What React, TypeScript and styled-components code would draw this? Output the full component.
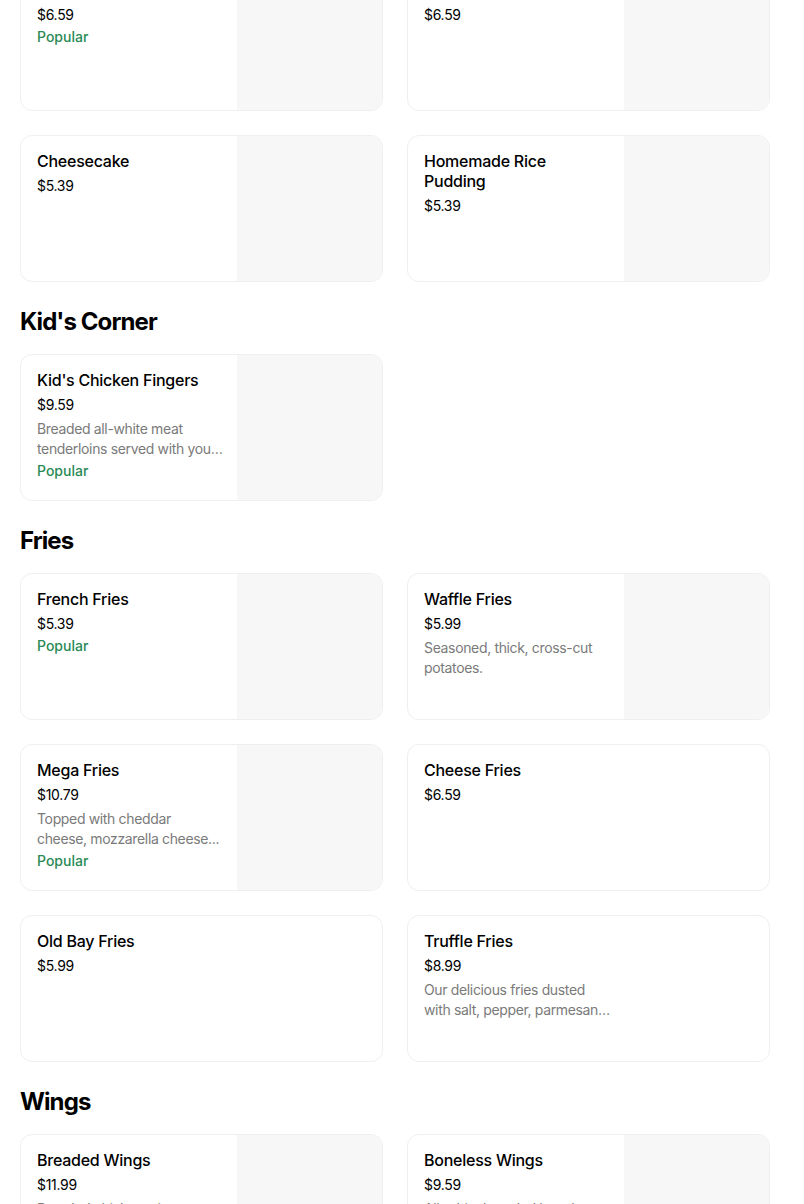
import styled, { createGlobalStyle } from "styled-components";

type Item = {
  name: string;
  price: string;
  description?: string;
  popular?: boolean;
  image?: boolean;
};

type Section = {
  title: string;
  items: Item[];
};

const sections: Section[] = [
  {
    title: "Desserts",
    items: [
      { name: "Chocolate Cake", price: "$6.59", popular: true, image: true },
      { name: "Carrot Cake", price: "$6.59", image: true },
      { name: "Cheesecake", price: "$5.39", image: true },
      { name: "Homemade Rice Pudding", price: "$5.39", image: true },
    ],
  },
  {
    title: "Kid's Corner",
    items: [
      {
        name: "Kid's Chicken Fingers",
        price: "$9.59",
        description: "Breaded all-white meat tenderloins served with your choice of fries.",
        popular: true,
        image: true,
      },
    ],
  },
  {
    title: "Fries",
    items: [
      { name: "French Fries", price: "$5.39", popular: true, image: true },
      {
        name: "Waffle Fries",
        price: "$5.99",
        description: "Seasoned, thick, cross-cut potatoes.",
        image: true,
      },
      {
        name: "Mega Fries",
        price: "$10.79",
        description: "Topped with cheddar\ncheese, mozzarella cheese...",
        popular: true,
        image: true,
      },
      { name: "Cheese Fries", price: "$6.59" },
      { name: "Old Bay Fries", price: "$5.99" },
      {
        name: "Truffle Fries",
        price: "$8.99",
        description: "Our delicious fries dusted with salt, pepper, parmesan cheese and truffle oil.",
      },
    ],
  },
  {
    title: "Wings",
    items: [
      {
        name: "Breaded Wings",
        price: "$11.99",
        description: "Breaded chicken wings tossed in your choice of sauce.",
        image: true,
      },
      {
        name: "Boneless Wings",
        price: "$9.59",
        description: "All-white breaded boneless wings tossed in your choice of sauce.",
        image: true,
      },
    ],
  },
];

const App = () => {
  return (
    <>
      <GlobalStyle />
      <Page>
        {sections.map((section) => (
          <SectionBlock key={section.title}>
            <SectionTitle>{section.title}</SectionTitle>
            <Grid>
              {section.items.map((item) => (
                <Card key={item.name}>
                  <Info>
                    <ItemName>{item.name}</ItemName>
                    <Price>{item.price}</Price>
                    {item.description && <Description>{item.description}</Description>}
                    {item.popular && <Popular>Popular</Popular>}
                  </Info>
                  {item.image && <Thumb />}
                </Card>
              ))}
            </Grid>
          </SectionBlock>
        ))}
      </Page>
    </>
  );
};

export default App;

const GlobalStyle = createGlobalStyle`
  body {
    margin: 0;
    background: #ffffff;
    font-family: Inter, "Liberation Sans", sans-serif;
    color: #000000;
  }
`;

// the page is scrolled part way down the menu
const Page = styled.div`
  padding: 0 34px 0 20px;
  margin-top: -108px;
`;

const SectionBlock = styled.section`
  display: flex;
  flex-direction: column;
`;

const SectionTitle = styled.h2`
  margin: 24px 0 16px;
  font-size: 24px;
  line-height: 32px;
  font-weight: 700;
  letter-spacing: -0.9px;
`;

const Grid = styled.div`
  display: grid;
  grid-template-columns: 1fr 1fr;
  gap: 24px;
`;

const Card = styled.div`
  display: flex;
  height: 147px;
  box-sizing: border-box;
  border: 1px solid #efefef;
  border-radius: 12px;
  overflow: hidden;
  background: #ffffff;
`;

const Info = styled.div`
  flex: none;
  width: 216px;
  box-sizing: border-box;
  padding: 15px 12px 0 16px;
  display: flex;
  flex-direction: column;
`;

const ItemName = styled.div`
  padding-right: 4px;
  font-size: 16px;
  line-height: 20px;
  font-weight: 500;
  letter-spacing: -0.25px;
`;

const Price = styled.div`
  margin-top: 5px;
  font-size: 14px;
  line-height: 20px;
  letter-spacing: -0.3px;
`;

const Description = styled.div`
  margin-top: 4px;
  font-size: 14px;
  line-height: 20px;
  letter-spacing: -0.35px;
  color: #7a7a7a;
  white-space: pre-line;
  display: -webkit-box;
  -webkit-line-clamp: 2;
  -webkit-box-orient: vertical;
  overflow: hidden;
`;

const Popular = styled.div`
  margin-top: 2px;
  font-size: 14px;
  line-height: 20px;
  font-weight: 500;
  color: #2a8a55;
`;

const Thumb = styled.div`
  flex: 1;
  background: #f7f7f7;
`;
